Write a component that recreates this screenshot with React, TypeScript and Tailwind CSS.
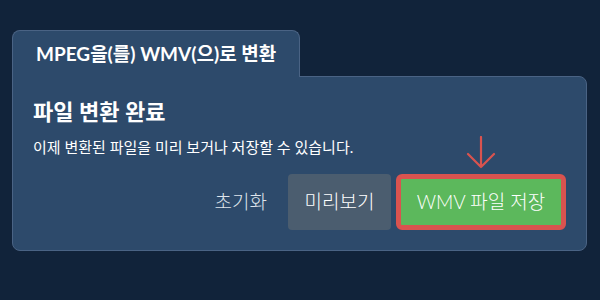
export default function App() {
  return (
    <div
      className="w-[600px] h-[300px] bg-[#11233a] pt-[30px] pl-[12px]"
      style={{ fontFamily: "Lato, 'Noto Sans CJK KR', sans-serif" }}
    >
      {/* Tab */}
      <div className="relative z-10 -mb-px w-[288px] h-[47px] rounded-t-lg border border-b-0 border-[#4a6384] bg-[#2d4a6b] pl-[23px] flex items-center">
        <h1 className="text-[19px] font-bold text-white">MPEG을(를) WMV(으)로 변환</h1>
      </div>

      {/* Panel */}
      <div className="w-[575px] h-[175px] rounded-tr-lg rounded-b-lg border border-[#4a6384] bg-[#2d4a6b] pl-[20px] pr-[20px] pt-[20px]">
        <h2 className="text-[22px] font-semibold text-white leading-[30px]">파일 변환 완료</h2>
        <p className="mt-[10px] text-[15px] text-white leading-[20px]">
          이제 변환된 파일을 미리 보거나 저장할 수 있습니다.
        </p>

        <div className="mt-[17px] flex items-center justify-end gap-[5px]">
          <button className="h-[55px] pr-[16px] text-[19px] font-light text-[#dfe5ec]">초기화</button>
          <button className="h-[56px] w-[103px] rounded bg-[#4b5d6f] text-[19px] font-light text-white">
            미리보기
          </button>
          <div className="relative">
            <svg width="30" height="34" viewBox="0 0 30 34" className="absolute left-[70px] -top-[38px]">
              <path
                d="M15 1 V31 M2 18 L15 31 L28 18"
                fill="none"
                stroke="#d9534f"
                strokeWidth="2.2"
                strokeLinecap="round"
                strokeLinejoin="round"
              />
            </svg>
            <button className="h-[56px] w-[170px] rounded-md border-[5px] border-[#d9534f] bg-[#5cb85c] text-[19px] font-light text-white">
              WMV 파일 저장
            </button>
          </div>
        </div>
      </div>
    </div>
  );
}
